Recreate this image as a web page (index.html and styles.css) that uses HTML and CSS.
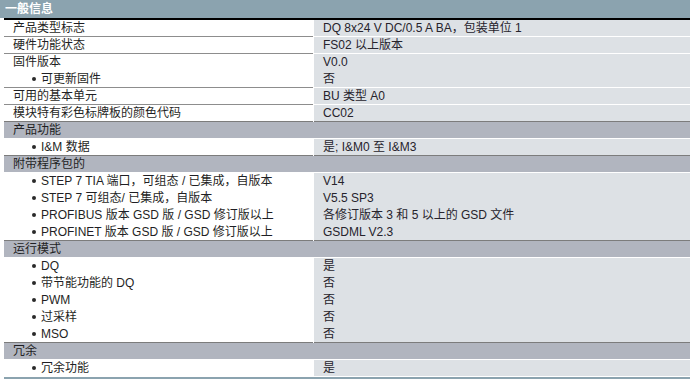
FILE: index.html
```html
<!DOCTYPE html>
<html lang="zh-CN">
<head>
<meta charset="utf-8">
<title>一般信息</title>
<link rel="stylesheet" href="styles.css">
</head>
<body>
<div class="sheet">
  <div class="head">一般信息</div>
  <div class="rule"></div>
  <div class="rows">
    <div class="row sep"><div class="lab">产品类型标志</div><div class="val">DQ 8x24 V DC/0.5 A BA，包装单位 1</div></div>
    <div class="row sep"><div class="lab">硬件功能状态</div><div class="val">FS02 以上版本</div></div>
    <div class="row"><div class="lab">固件版本</div><div class="val">V0.0</div></div>
    <div class="row sep"><div class="lab sub">可更新固件</div><div class="val">否</div></div>
    <div class="row sep"><div class="lab">可用的基本单元</div><div class="val">BU 类型 A0</div></div>
    <div class="row end"><div class="lab">模块特有彩色标牌板的颜色代码</div><div class="val">CC02</div></div>
    <div class="section">产品功能</div>
    <div class="row end"><div class="lab sub">I&amp;M 数据</div><div class="val">是; I&amp;M0 至 I&amp;M3</div></div>
    <div class="section">附带程序包的</div>
    <div class="row"><div class="lab sub">STEP 7 TIA 端口，可组态 / 已集成，自版本</div><div class="val">V14</div></div>
    <div class="row"><div class="lab sub">STEP 7 可组态/ 已集成，自版本</div><div class="val">V5.5 SP3</div></div>
    <div class="row"><div class="lab sub">PROFIBUS 版本 GSD 版 / GSD 修订版以上</div><div class="val">各修订版本 3 和 5 以上的 GSD 文件</div></div>
    <div class="row end"><div class="lab sub">PROFINET 版本 GSD 版 / GSD 修订版以上</div><div class="val">GSDML V2.3</div></div>
    <div class="section">运行模式</div>
    <div class="row"><div class="lab sub">DQ</div><div class="val">是</div></div>
    <div class="row"><div class="lab sub">带节能功能的 DQ</div><div class="val">否</div></div>
    <div class="row"><div class="lab sub">PWM</div><div class="val">否</div></div>
    <div class="row"><div class="lab sub">过采样</div><div class="val">否</div></div>
    <div class="row end"><div class="lab sub">MSO</div><div class="val">否</div></div>
    <div class="section">冗余</div>
    <div class="row last"><div class="lab sub">冗余功能</div><div class="val">是</div></div>
  </div>
  <div class="foot"></div>
</div>
</body>
</html>
```
FILE: styles.css
```css
html, body {
  margin: 0;
  padding: 0;
  background: #ffffff;
}
body {
  font-family: "Liberation Sans", "Noto Sans CJK SC", sans-serif;
  font-size: 12px;
  color: #1f1f24;
}
.sheet {
  width: 690px;
}
.head {
  height: 18px;
  line-height: 19px;
  background: #8ba3af;
  color: #ffffff;
  font-weight: bold;
  padding-left: 5px;
}
.rule {
  margin-left: 4px;
  height: 2px;
  background: #000000;
}
.rows {
  margin-left: 4px;
  width: 686px;
}
.row {
  display: flex;
  height: 17px;
}
.lab {
  width: 300px;
  padding-left: 9px;
  height: 16px;
  line-height: 16px;
  border-bottom: 1px solid transparent;
  background: #ffffff;
  white-space: nowrap;
  display: flex;
  align-items: center;
}
.val {
  width: 367px;
  margin-left: 1px;
  padding-left: 9px;
  height: 16px;
  line-height: 16px;
  border-bottom: 1px solid #dde1e5;
  background: #dde1e5;
  white-space: nowrap;
  color: #26232c;
}
.row.sep .lab {
  border-bottom-color: #8d8d8d;
}
.row.sep .val {
  border-bottom-color: #ffffff;
}
.row.end .lab,
.row.end .val {
  border-bottom-color: #7c7c7c;
}
.row.last .val {
  border-bottom-color: #ffffff;
}
.sub::before {
  content: "";
  width: 4px;
  height: 4px;
  border-radius: 50%;
  background: #2a2a2a;
  margin-left: 19px;
  margin-right: 5px;
  flex: none;
}
.section {
  height: 16px;
  line-height: 16px;
  padding-left: 9px;
  background: #b1b5bf;
  border-bottom: 1px solid #ffffff;
  color: #1f1f24;
}
.foot {
  margin-left: 4px;
  height: 2px;
  background: #8ba3af;
}
```
